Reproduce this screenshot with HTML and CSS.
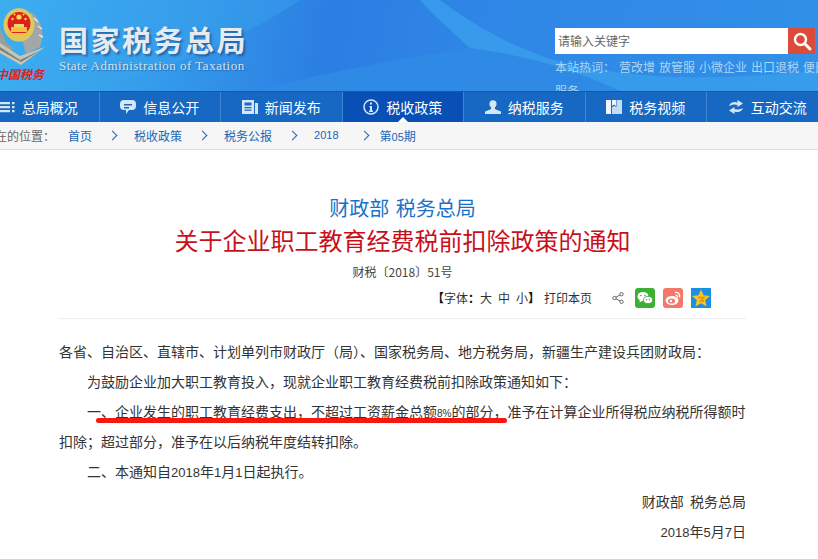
FILE: index.html
```html
<!DOCTYPE html>
<html lang="zh-CN">
<head>
    <meta charset="UTF-8">
    <meta name="viewport" content="width=device-width, initial-scale=1.0">
    <title>关于企业职工教育经费税前扣除政策的通知</title>
    <link rel="stylesheet" href="styles.css">
</head>
<body>
    <header class="top">
        <svg class="top-bg" viewBox="0 0 818 91" preserveAspectRatio="none" aria-hidden="true">
            <path d="M0 91 L0 0 L300 0 C240 40 170 70 80 91 Z" fill="#3aa5ee" opacity="0.45"/>
            <path d="M250 91 C340 70 430 52 480 48 C540 60 600 76 640 91 Z" fill="#2f8ae6"/>
            <path d="M440 0 C480 30 520 50 560 62 C620 76 700 84 818 70 L818 91 L620 91 C580 72 530 56 470 48 C450 30 430 12 420 0 Z" fill="#3a9fec" opacity="0.8"/>
        </svg>

        <div class="logo">
            <svg class="emblem" viewBox="0 0 50 70" aria-hidden="true">
                <path d="M31 12 C42 20 45 34 40 47 L26 54 L22 40 Z" fill="#a3a8a6"/>
                <path d="M34 18 L38 22 M38 26 L42 29 M39 35 L43 37" stroke="#e4e6e2" stroke-width="1.500"/>
                <path d="M0 28 L6 42 L14 50 L4 48 L0 46 Z" fill="#9a9f9c"/>
                <path d="M0 43 L20 56 L45 47 L21 65 L0 53 Z" fill="#c8c5b4"/>
                <path d="M0 47 L20 60 L41 50 L21 62 L0 50 Z" fill="#7d8078"/>
                <ellipse cx="19" cy="25" rx="15.500" ry="16.700" fill="#e0c860"/>
                <ellipse cx="19" cy="23.500" rx="11.500" ry="11.500" fill="#dc1f1f"/>
                <path d="M11 27h16v5H11zM8 33h22v3H8z" fill="#f0c23f"/>
                <path d="M14 24h10v3H14z" fill="#f5d768"/>
                <circle cx="19" cy="17" r="2.600" fill="#ffd94a"/>
                <circle cx="12.500" cy="19" r="1.200" fill="#ffd94a"/>
                <circle cx="25.500" cy="19" r="1.200" fill="#ffd94a"/>
                <circle cx="14.500" cy="14.500" r="1" fill="#ffd94a"/>
                <circle cx="23.500" cy="14.500" r="1" fill="#ffd94a"/>
            </svg>
            <span class="logo-seal">中国税务</span>
        </div>

        <div class="site-name">
            <div class="site-cn">国家税务总局</div>
            <div class="site-en">State Administration of Taxation</div>
        </div>

        <div class="top-right">
            <div class="search">
                <div class="search-input">请输入关键字</div>
                <div class="search-btn">
                    <svg width="20" height="20" viewBox="0 0 20 20" aria-hidden="true">
                        <circle cx="8.500" cy="8.500" r="5.500" fill="none" stroke="#fff" stroke-width="2.400"/>
                        <path d="M12.800 12.800 L18 18" stroke="#fff" stroke-width="3" stroke-linecap="round"/>
                    </svg>
                </div>
            </div>
            <div class="hot-words">
                <span class="hot-label">本站热词：</span><a>营改增</a><a>放管服</a><a>小微企业</a><a>出口退税</a><a>便民</a><br>服务
            </div>
        </div>
    </header>

    <nav class="main-nav">
        <a class="nav-item">
            <svg class="nav-icon" viewBox="0 0 16 16"><path d="M0 3h11v2.200H0zM0 7h11v2.200H0zM0 11h11v2.200H0zM13 3h2.500v2.200H13zM13 7h2.500v2.200H13zM13 11h2.500v2.200H13z" fill="#d5e6f7"/></svg>
            总局概况
        </a>
        <a class="nav-item">
            <svg class="nav-icon" viewBox="0 0 16 16"><path d="M4 1h8a4 4 0 0 1 4 4v2a4 4 0 0 1-4 4H9l-3 4v-4H4a4 4 0 0 1-4-4V5a4 4 0 0 1 4-4z" fill="#d5e6f7"/><path d="M4 5h8v1.500H4zM4 8h5v1.500H4z" fill="#1668c2"/></svg>
            信息公开
        </a>
        <a class="nav-item">
            <svg class="nav-icon" viewBox="0 0 16 16"><path d="M0 1h12v14H0z" fill="#d5e6f7"/><path d="M2.500 3.500h7v3h-7zM2.500 8h7v1.200h-7zM2.500 10.500h7v1.200h-7z" fill="#1668c2"/><path d="M13 4h3v11h-3z" fill="#d5e6f7"/></svg>
            新闻发布
        </a>
        <a class="nav-item active">
            <svg class="nav-icon" viewBox="0 0 16 16"><circle cx="8" cy="8" r="7" fill="none" stroke="#d5e6f7" stroke-width="1.500"/><path d="M7 3.500h2v2H7zM6.500 7h2.500v4.500h1V13H6v-1.500h1V8.300h-.5z" fill="#d5e6f7"/></svg>
            税收政策
        </a>
        <a class="nav-item">
            <svg class="nav-icon" viewBox="0 0 18 16"><circle cx="9" cy="4.500" r="4" fill="#d5e6f7"/><path d="M7 8h4l.5 2.500L18 13v3H0v-3l6.500-2.500z" fill="#d5e6f7"/></svg>
            纳税服务
        </a>
        <a class="nav-item">
            <svg class="nav-icon" viewBox="0 0 16 16"><path d="M0 1h5v14H0zM6 1h4v6l-2-1.500L6 7z" fill="#f0f6fc"/><path d="M10.500 1H16v14H6V8l2.500-1 2 1z" fill="#c5dcf2"/></svg>
            税务视频
        </a>
        <a class="nav-item">
            <svg class="nav-icon" viewBox="0 0 16 16"><path d="M1 7C2 3.500 6 2 9.500 3.500V1L15 4.500 9.500 8V6C7 5 4 5.500 1 7zM15 9c-1 3.500-5 5-8.500 3.500V15L1 11.500 6.500 8v2c2.500 1 5.500.500 8.500-1z" fill="#d5e6f7"/></svg>
            互动交流
        </a>
    </nav>

    <div class="crumbs">
        <span class="crumb-label">您现在的位置：</span>
        <a>首页</a><i></i><a>税收政策</a><i></i><a>税务公报</a><i></i><a class="num">2018</a><i class="wide"></i><a>第<span class="num">05</span>期</a>
    </div>

    <main class="article">
        <h2 class="title-sub">财政部 税务总局</h2>
        <h1 class="title-main">关于企业职工教育经费税前扣除政策的通知</h1>
        <div class="doc-no">财税〔2018〕51号</div>

        <div class="tools">
            <span class="font-size"><b>【</b>字体<b>：</b><span>大</span><span>中</span><span class="last">小</span><b>】</b></span>
            <span class="print">打印本页</span>
            <svg class="share" viewBox="0 0 12 12" aria-hidden="true">
                <path d="M9.500 2.200 L2.500 6 L9.500 9.800" fill="none" stroke="#666" stroke-width="1"/>
                <circle cx="9.500" cy="2.200" r="1.700" fill="#fff" stroke="#666"/>
                <circle cx="2.500" cy="6" r="1.700" fill="#fff" stroke="#666"/>
                <circle cx="9.500" cy="9.800" r="1.700" fill="#fff" stroke="#666"/>
            </svg>
            <svg class="social" viewBox="0 0 20 20" aria-hidden="true">
                <rect width="20" height="20" rx="3" fill="#3cb034"/>
                <ellipse cx="8" cy="8.500" rx="5.500" ry="4.500" fill="#fff"/>
                <path d="M5 11.500 L4.500 14.500 L8 12.500 Z" fill="#fff"/>
                <ellipse cx="13" cy="12" rx="4.500" ry="3.600" fill="#fff" stroke="#3cb034" stroke-width="0.800"/>
                <circle cx="6" cy="7.500" r=".8" fill="#3cb034"/>
                <circle cx="10" cy="7.500" r=".8" fill="#3cb034"/>
                <circle cx="11.500" cy="11.500" r=".7" fill="#3cb034"/>
                <circle cx="14.500" cy="11.500" r=".7" fill="#3cb034"/>
            </svg>
            <svg class="social" viewBox="0 0 20 20" aria-hidden="true">
                <rect width="20" height="20" rx="3" fill="#f5776a"/>
                <ellipse cx="9" cy="12.500" rx="6.500" ry="4.500" fill="#fff"/>
                <ellipse cx="8.500" cy="13" rx="3.500" ry="2.600" fill="#f5776a"/>
                <circle cx="8" cy="13" r="1.200" fill="#fff"/>
                <path d="M12 4.500 C15 4 17.500 6 16.500 9.500" fill="none" stroke="#fff" stroke-width="1.400"/>
                <path d="M12.500 7 C14 7 15 8 14.500 9.500" fill="none" stroke="#fff" stroke-width="1.200"/>
            </svg>
            <svg class="social" viewBox="0 0 20 20" aria-hidden="true">
                <rect width="20" height="20" fill="#1a8fe3"/>
                <path d="M10 1.500 L12.600 7.200 L19 7.900 L14.200 12 L15.600 18.500 L10 15.200 L4.400 18.500 L5.800 12 L1 7.900 L7.400 7.200 Z" fill="#f8c51c"/>
                <path d="M7 9.500h6l-3.500 3.500H13" fill="none" stroke="#e78a1a" stroke-width="1.400"/>
            </svg>
        </div>

        <div class="body-text">
            <p class="no-indent">各省、自治区、直辖市、计划单列市财政厅（局）、国家税务局、地方税务局，新疆生产建设兵团财政局：</p>
            <p>为鼓励企业加大职工教育投入，现就企业职工教育经费税前扣除政策通知如下：</p>
            <p class="marked">一、企业发生的职工教育经费支出，不超过工资薪金总额<span class="num-small">8%</span>的部分，准予在计算企业所得税应纳税所得额时扣除；超过部分，准予在以后纳税年度结转扣除。<span class="red-line"></span></p>
            <p>二、本通知自<span class="num">2018</span>年<span class="num">1</span>月<span class="num">1</span>日起执行。</p>
            <p class="sign">财政部 税务总局</p>
            <p class="sign"><span class="num">2018</span>年<span class="num">5</span>月<span class="num">7</span>日</p>
        </div>
    </main>
</body>
</html>
```

FILE: styles.css
```css
* {
    margin: 0;
    padding: 0;
    box-sizing: border-box;
}

html, body {
    height: 100%;
    overflow: hidden;
}

body {
    background: #fff;
    color: #333;
    font-family: "Noto Sans CJK SC", "Liberation Sans", sans-serif;
    font-size: 14px;
}

.num {
    font-family: "Liberation Sans", sans-serif;
    font-size: 13px;
    line-height: 1;
}

.num-small {
    font-family: "Liberation Sans", sans-serif;
    font-size: 10px;
    line-height: 1;
}

/* header */
.top {
    position: relative;
    display: flex;
    height: 91px;
    overflow: hidden;
    background: linear-gradient(100deg, #3fb5f2 0, #3499ea 22%, #2c7ee2 40%, #2f86e6 58%, #3190e8 100%);
}

.top-bg {
    position: absolute;
    left: 0;
    top: 0;
    width: 100%;
    height: 100%;
}

.logo {
    position: relative;
    flex: none;
    width: 59px;
}

.emblem {
    position: absolute;
    left: 0;
    top: 0;
    width: 50px;
    height: 70px;
}

.logo-seal {
    position: absolute;
    left: -4px;
    top: 65px;
    width: 60px;
    color: #e0201c;
    font-size: 12px;
    font-style: italic;
    font-weight: 700;
    line-height: 18px;
    white-space: nowrap;
}

.site-name {
    position: relative;
    flex: none;
    width: 496px;
    padding-top: 20px;
}

.site-cn {
    color: #e6ebef;
    font-size: 29px;
    font-weight: 700;
    letter-spacing: 2.500px;
    line-height: 38px;
    text-shadow: 2px 2px 2px rgba(20, 60, 120, .55);
}

.site-en {
    color: #d6e2ec;
    font-family: "Liberation Serif", serif;
    font-size: 13px;
    letter-spacing: .5px;
    line-height: 15px;
    text-shadow: 1px 1px 1px rgba(20, 60, 120, .5);
}

.top-right {
    position: relative;
    flex: none;
    width: 263px;
    padding-top: 28px;
}

.search {
    display: flex;
    width: 260px;
    height: 26px;
}

.search-input {
    flex: 1;
    padding-left: 3px;
    background: #fff;
    color: #666;
    font-size: 12px;
    line-height: 26px;
}

.search-btn {
    display: flex;
    align-items: center;
    justify-content: center;
    width: 27px;
    background: #dc4b3a;
}

.hot-words {
    margin-top: 1px;
    color: #a8d6f8;
    font-size: 12px;
    line-height: 24px;
    white-space: nowrap;
}

.hot-label {
    margin-right: 4px;
}

.hot-words a {
    margin-right: 4px;
}

/* nav */
.main-nav {
    display: flex;
    height: 31px;
    margin-left: -22px;
    border-top: 1px solid #0e5cb0;
    background: #1668c2;
}

.nav-item {
    position: relative;
    display: flex;
    flex: none;
    align-items: center;
    justify-content: center;
    gap: 7px;
    width: 121.500px;
    border-right: 1px solid #3f86d2;
    color: #fff;
    font-size: 14px;
}

.nav-item.active {
    background: #0a4fb5;
}

.nav-item.active::after {
    content: "";
    position: absolute;
    left: 50%;
    bottom: 0;
    margin-left: -5px;
    border: 5px solid transparent;
    border-top: 0;
    border-bottom-color: #fff;
}

.nav-icon {
    flex: none;
    width: 16px;
    height: 16px;
}

/* breadcrumb */
.crumbs {
    display: flex;
    align-items: center;
    height: 28px;
    margin-left: -29px;
    border-bottom: 1px solid #ddd;
    background: #f6f6f6;
    font-size: 12px;
    white-space: nowrap;
}

.crumb-label {
    width: 97px;
    color: #666;
}

.crumbs a {
    color: #1a66b8;
}

.crumbs .num {
    font-size: 11px;
}

.crumbs i {
    width: 7px;
    height: 7px;
    margin: 0 18px 0 17px;
    border-top: 1px solid #1a66b8;
    border-right: 1px solid #1a66b8;
    transform: rotate(45deg);
}

.crumbs i.wide {
    margin: 0 12px 0 22px;
}

/* article */
.article {
    width: 687px;
    margin-left: 59px;
    padding-top: 43px;
}

.title-sub {
    color: #1a72c8;
    font-size: 20px;
    font-weight: 400;
    line-height: 30px;
    text-align: center;
    word-spacing: 2px;
}

.title-main {
    color: #c8101a;
    font-size: 24px;
    font-weight: 400;
    line-height: 34px;
    text-align: center;
}

.doc-no {
    margin-top: 5px;
    color: #444;
    font-size: 12px;
    line-height: 20px;
    text-align: center;
}

.tools {
    display: flex;
    align-items: center;
    justify-content: flex-end;
    height: 33px;
    margin-top: 4px;
    padding: 0 35px 9px 0;
    border-bottom: 1px solid #eee;
    color: #333;
    font-size: 12px;
}

.font-size {
    display: flex;
    align-items: center;
    white-space: nowrap;
}

.font-size b {
    color: #111;
}

.font-size span {
    margin-right: 6px;
}

.font-size span.last {
    margin-right: 0;
}

.print {
    margin: 0 20px 0 4px;
}

.share {
    width: 12px;
    height: 12px;
    margin-right: 11px;
}

.social {
    width: 20px;
    height: 20px;
    margin-right: 8px;
}

.social:last-child {
    margin-right: 0;
}

.body-text {
    margin-top: 17px;
    color: #333;
    font-size: 14px;
    line-height: 30px;
}

.body-text p {
    text-indent: 28px;
}

.body-text .no-indent {
    text-indent: 0;
}

.body-text .sign {
    text-align: right;
    word-spacing: 3px;
}

.marked {
    position: relative;
}

.red-line {
    position: absolute;
    left: 37px;
    top: 22px;
    width: 411px;
    height: 5px;
    border-radius: 3px;
    background: #f5190f;
}
```
